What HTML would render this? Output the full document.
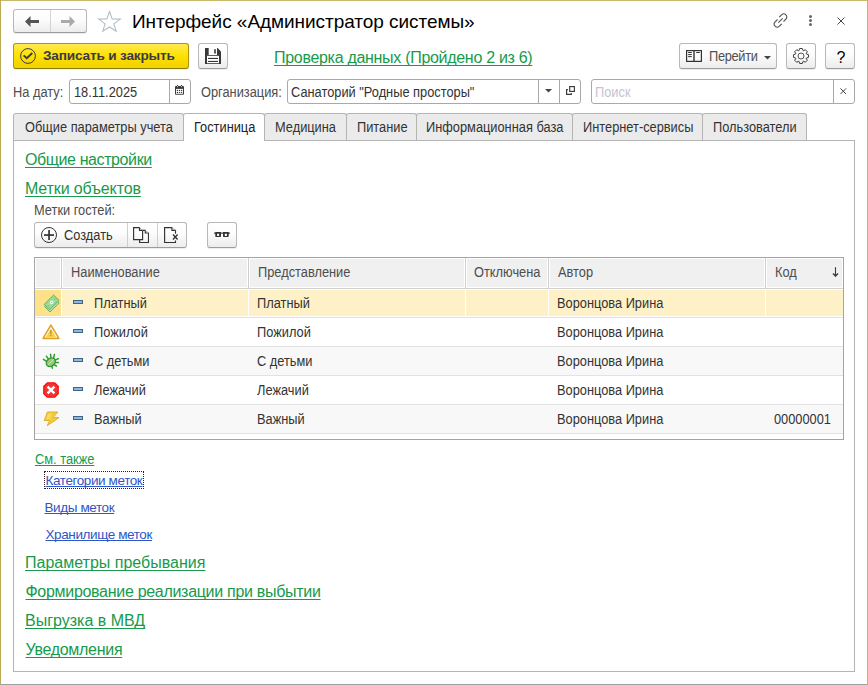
<!DOCTYPE html>
<html><head><meta charset="utf-8">
<style>
*{box-sizing:border-box}
html,body{margin:0;padding:0;background:#fff}
body{width:868px;height:685px;position:relative;overflow:hidden;font-family:"Liberation Sans",sans-serif;color:#333}
.abs{position:absolute}
.t{position:absolute;white-space:nowrap;font-size:14px;line-height:14px;letter-spacing:-0.6px}
.n{letter-spacing:0;transform:scaleX(0.915);transform-origin:0 0}
.lnk{position:absolute;white-space:nowrap;font-size:16px;line-height:16px;letter-spacing:-0.3px;color:#179a4b;text-decoration:underline;text-decoration-thickness:1px;text-underline-offset:2px;text-decoration-skip-ink:none}
.blue{color:#2f56c6;font-size:13.5px;line-height:13.5px;letter-spacing:-0.4px}
.btn{position:absolute;border:1px solid #b8b8b8;border-bottom-color:#9c9c9c;border-radius:3px;background:linear-gradient(#ffffff 0%,#fcfcfc 45%,#ececec 100%);box-shadow:0 1px 0 rgba(0,0,0,0.07)}
.inp{position:absolute;border:1px solid #a9a9a9;border-radius:3px;background:#fff}
.vl{position:absolute;top:0;bottom:0;width:1px;background:#a9a9a9}
.tab{position:absolute;top:113px;height:28px;border:1px solid #b4b4b4;border-bottom:none;border-radius:3px 3px 0 0;background:#ebebeb}
.tab.act{background:#fff;height:28px;z-index:2}
.row{position:absolute;left:35px;width:808px;height:29px}
</style></head><body>
<!-- window frame -->
<div class="abs" style="left:0;top:0;width:868px;height:1px;background:#c9b96b"></div>
<div class="abs" style="left:0;top:0;width:1px;height:685px;background:#bcab55"></div>
<div class="abs" style="left:867px;top:0;width:1px;height:685px;background:#c4b45c;z-index:5"></div>
<div class="abs" style="left:0;top:684px;width:868px;height:1px;background:#a0a0a4"></div>

<!-- nav buttons -->
<div class="btn" style="left:13px;top:9px;width:74px;height:24px"></div>
<div class="abs" style="left:50px;top:10px;width:1px;height:22px;background:#d4d4d4"></div>
<svg class="abs" style="left:25px;top:16px" width="14" height="11" viewBox="0 0 14 11"><path d="M0 5.5 L5.5 0 L5.5 4 L14 4 L14 7 L5.5 7 L5.5 11 Z" fill="#555"/></svg>
<svg class="abs" style="left:61px;top:16px" width="14" height="11" viewBox="0 0 14 11"><path d="M14 5.5 L8.5 0 L8.5 4 L0 4 L0 7 L8.5 7 L8.5 11 Z" fill="#aaa"/></svg>
<!-- star -->
<svg class="abs" style="left:97px;top:9px" width="25" height="24" viewBox="0 0 25 24"><path d="M12.5 2.5 L15.2 9.9 L23.3 10.1 L16.9 14.9 L19.2 22.2 L12.5 18 L5.8 22.2 L8.1 14.9 L1.7 10.1 L9.8 9.9 Z" fill="none" stroke="#b4bcc4" stroke-width="1.1"/></svg>
<!-- title -->
<div class="t" style="left:132px;top:12px;font-size:19px;line-height:19px;color:#000;letter-spacing:-0.05px">Интерфейс «Администратор системы»</div>
<!-- top right icons -->
<svg class="abs" style="left:772px;top:12px" width="17" height="17" viewBox="0 0 17 17"><g fill="none" stroke="#505050" stroke-width="1.1"><path d="M7.2 5.2 L9.6 2.8 A2.6 2.6 0 0 1 13.9 7.1 L11.5 9.5"/><path d="M9.8 11.8 L7.4 14.2 A2.6 2.6 0 0 1 3.1 9.9 L5.5 7.5"/><path d="M6.3 10.7 L10.7 6.3"/></g></svg>
<div class="abs" style="left:809px;top:15px;width:3px;height:3px;border-radius:50%;background:#666"></div>
<div class="abs" style="left:809px;top:19px;width:3px;height:3px;border-radius:50%;background:#666"></div>
<div class="abs" style="left:809px;top:23px;width:3px;height:3px;border-radius:50%;background:#666"></div>
<svg class="abs" style="left:836.5px;top:16.5px" width="8" height="8" viewBox="0 0 8 8"><path d="M0.5 0.5 L7.5 7.5 M7.5 0.5 L0.5 7.5" stroke="#444" stroke-width="1"/></svg>

<!-- row 2 -->
<div class="abs" style="left:13px;top:43px;width:176px;height:26px;border:1px solid #ad9606;border-bottom-color:#8f7c00;border-radius:3px;background:linear-gradient(#ffea50,#fde100 50%,#f0d000);box-shadow:0 1px 0 rgba(60,60,120,0.08)"></div>
<svg class="abs" style="left:20px;top:48px" width="16" height="16" viewBox="0 0 16 16"><circle cx="8" cy="8" r="7.4" fill="none" stroke="#3a3a4a" stroke-width="1"/><path d="M3.6 7.4 L6.8 10.2 L12.3 5" fill="none" stroke="#3a3a4a" stroke-width="1.9"/></svg>
<div class="t" style="left:43px;top:49.3px;font-size:13.6px;line-height:13.6px;font-weight:bold;color:#3a3a48;letter-spacing:-0.17px">Записать и закрыть</div>
<div class="btn" style="left:198px;top:43px;width:30px;height:26px"></div>
<svg class="abs" style="left:205px;top:48px" width="16" height="16" viewBox="0 0 16 16"><path d="M0 0 H12.6 L16 3.6 V16 H0 Z" fill="#383838"/><rect x="3.7" y="0" width="8.3" height="7" fill="#fff"/><rect x="9.2" y="1.2" width="1.6" height="4.4" fill="#383838"/><rect x="2" y="7.8" width="12" height="7.4" fill="#fff"/><rect x="3" y="9.9" width="10" height="1.1" fill="#383838"/><rect x="3" y="12.9" width="10" height="1.1" fill="#383838"/></svg>
<div class="lnk" style="left:274px;top:50px">Проверка данных (Пройдено 2 из 6)</div>

<div class="btn" style="left:679px;top:43px;width:98px;height:26px"></div>
<svg class="abs" style="left:686px;top:50px" width="16" height="12" viewBox="0 0 16 12"><rect x="0.6" y="0.6" width="14.8" height="10.8" fill="none" stroke="#333" stroke-width="1.2"/><rect x="7.3" y="0.6" width="1.4" height="10.8" fill="#333"/><g fill="#333"><rect x="2.1" y="2" width="3.7" height="1"/><rect x="2.1" y="4.1" width="3.7" height="1"/><rect x="2.1" y="6.1" width="3.7" height="1"/><rect x="10.2" y="2" width="3.6" height="1"/></g></svg>
<div class="t n" style="left:709px;top:49px;color:#505050;letter-spacing:-0.35px">Перейти</div>
<svg class="abs" style="left:764px;top:56px" width="7" height="4" viewBox="0 0 7 4"><path d="M0 0 H7 L3.5 3.5 Z" fill="#444"/></svg>

<div class="btn" style="left:786px;top:43px;width:30px;height:26px"></div>
<svg class="abs" style="left:792px;top:47px" width="18" height="18" viewBox="0 0 18 18"><path fill="none" stroke="#3a3a3a" stroke-width="1" stroke-linejoin="round" d="M6.95 3.68 L7.66 1.52 L10.34 1.52 L11.05 3.68 A5.7 5.7 0 0 1 11.31 3.79 L13.34 2.76 L15.24 4.66 L14.21 6.69 A5.7 5.7 0 0 1 14.32 6.95 L16.48 7.66 L16.48 10.34 L14.32 11.05 A5.7 5.7 0 0 1 14.21 11.31 L15.24 13.34 L13.34 15.24 L11.31 14.21 A5.7 5.7 0 0 1 11.05 14.32 L10.34 16.48 L7.66 16.48 L6.95 14.32 A5.7 5.7 0 0 1 6.69 14.21 L4.66 15.24 L2.76 13.34 L3.79 11.31 A5.7 5.7 0 0 1 3.68 11.05 L1.52 10.34 L1.52 7.66 L3.68 6.95 A5.7 5.7 0 0 1 3.79 6.69 L2.76 4.66 L4.66 2.76 L6.69 3.79 Z"/><circle cx="9" cy="9" r="3" fill="none" stroke="#555" stroke-width="1"/></svg>
<div class="btn" style="left:825px;top:43px;width:30px;height:26px"></div>
<div class="t" style="left:836.5px;top:49.5px;font-size:16px;line-height:16px;color:#000;letter-spacing:0">?</div>

<!-- row 3 -->
<div class="t n" style="left:13px;top:85px;color:#4d4d4d">На дату:</div>
<div class="inp" style="left:69px;top:79px;width:122px;height:25px"><div class="vl" style="left:99px"></div></div>
<div class="t n" style="left:73.5px;top:85px;color:#333">18.11.2025</div>
<svg class="abs" style="left:175px;top:85px" width="9" height="10" viewBox="0 0 9 10"><rect x="0" y="0.9" width="9" height="8.9" rx="1" fill="#3c3c3c"/><rect x="1" y="3.9" width="7" height="4.9" fill="#fff"/><rect x="1.9" y="0" width="1.2" height="1.2" fill="#3c3c3c"/><rect x="5.9" y="0" width="1.2" height="1.2" fill="#3c3c3c"/><rect x="2.1" y="1.1" width="0.8" height="1" fill="#fff"/><rect x="6.1" y="1.1" width="0.8" height="1" fill="#fff"/><g fill="#3c3c3c"><circle cx="2.4" cy="5.4" r="0.7"/><circle cx="4.5" cy="5.4" r="0.7"/><circle cx="6.6" cy="5.4" r="0.7"/><circle cx="2.4" cy="7.4" r="0.7"/><circle cx="4.5" cy="7.4" r="0.7"/><circle cx="6.6" cy="7.4" r="0.7"/></g></svg>
<div class="t n" style="left:200.5px;top:85px;color:#4d4d4d">Организация:</div>
<div class="inp" style="left:287px;top:79px;width:294px;height:25px"><div class="vl" style="left:250px"></div><div class="vl" style="left:271px"></div></div>
<div class="t n" style="left:291px;top:85px;color:#333">Санаторий "Родные просторы"</div>
<svg class="abs" style="left:545px;top:89px" width="7" height="4" viewBox="0 0 7 4"><path d="M0 0 H7 L3.5 3.5 Z" fill="#444"/></svg>
<svg class="abs" style="left:566px;top:86px" width="9" height="9" viewBox="0 0 9 9"><rect x="3.7" y="0.6" width="4.7" height="4.8" fill="none" stroke="#3a3a3a" stroke-width="1.15"/><path d="M1.9 3.6 H0.6 V8.4 H5.3 V7.1" fill="none" stroke="#3a3a3a" stroke-width="1.15"/></svg>
<div class="inp" style="left:591px;top:79px;width:264px;height:25px"><div class="vl" style="left:241px"></div></div>
<div class="t n" style="left:594.5px;top:85px;color:#c4c4d0">Поиск</div>
<svg class="abs" style="left:840px;top:87.5px" width="6.5" height="6.5" viewBox="0 0 6.5 6.5"><path d="M0.4 0.4 L6.1 6.1 M6.1 0.4 L0.4 6.1" stroke="#444" stroke-width="1"/></svg>

<!-- panel -->
<div class="abs" style="left:13px;top:140px;width:842px;height:532px;border:1px solid #b4b4b4;z-index:1"></div>
<!-- tabs -->
<div class="tab" style="left:13px;width:171px"></div>
<div class="tab act" style="left:183px;width:82px;height:28px"></div>
<div class="tab" style="left:264px;width:83px"></div>
<div class="tab" style="left:346px;width:71px"></div>
<div class="tab" style="left:416px;width:157px"></div>
<div class="tab" style="left:572px;width:131px"></div>
<div class="tab" style="left:702px;width:105px"></div>
<div class="t n" style="left:24.5px;top:119.5px;color:#333;z-index:3">Общие параметры учета</div>
<div class="t n" style="left:193.5px;top:119.5px;color:#222;z-index:3">Гостиница</div>
<div class="t n" style="left:274.5px;top:119.5px;color:#333;z-index:3">Медицина</div>
<div class="t n" style="left:356.5px;top:119.5px;color:#333;z-index:3">Питание</div>
<div class="t n" style="left:425.5px;top:119.5px;color:#333;z-index:3">Информационная база</div>
<div class="t n" style="left:582.5px;top:119.5px;color:#333;z-index:3">Интернет-сервисы</div>
<div class="t n" style="left:712.5px;top:119.5px;color:#333;z-index:3">Пользователи</div>

<!-- content links -->
<div class="lnk" style="left:25px;top:152px;letter-spacing:-0.4px">Общие настройки</div>
<div class="lnk" style="left:25px;top:181px;letter-spacing:-0.14px">Метки объектов</div>
<div class="t n" style="left:33.5px;top:203.3px;color:#4d4d4d">Метки гостей:</div>

<!-- command bar -->
<div class="btn" style="left:34px;top:222px;width:153px;height:26px"></div>
<div class="abs" style="left:127px;top:223px;width:1px;height:24px;background:#cfcfcf"></div>
<div class="abs" style="left:157px;top:223px;width:1px;height:24px;background:#cfcfcf"></div>
<svg class="abs" style="left:41px;top:227px" width="16" height="16" viewBox="0 0 16 16"><circle cx="8" cy="8" r="7.5" fill="none" stroke="#333" stroke-width="1"/><rect x="7.2" y="3" width="1.7" height="10" fill="#333"/><rect x="3" y="7.2" width="10" height="1.7" fill="#333"/></svg>
<div class="t n" style="left:64px;top:228.4px;color:#333">Создать</div>
<svg class="abs" style="left:133px;top:227px" width="16" height="16" viewBox="0 0 16 16"><g fill="none" stroke="#333" stroke-width="1.15"><path d="M9.6 3.4 H12.3 V6 H15.5 V15.5 H6.6 V12.6"/><path d="M0.6 0.6 H6.5 V3.4 H9.6 V12.6 H0.6 Z"/></g><path d="M6.5 0.6 L9.6 3.4 M12.3 3.4 L15.5 6" stroke="#999" stroke-width="0.8"/></svg>
<svg class="abs" style="left:164px;top:227px" width="15" height="16" viewBox="0 0 15 16"><path d="M11.5 6.8 V3.4 H7.9 V0.6 H0.6 V15.5 H11.5 V13.4" fill="none" stroke="#333" stroke-width="1.15"/><path d="M7.9 0.6 L11.5 3.4" stroke="#999" stroke-width="0.8"/><path d="M9 7.6 L13.6 12.5 M13.6 7.6 L9 12.5" stroke="#333" stroke-width="1.4"/></svg>
<div class="btn" style="left:207px;top:222px;width:30px;height:26px"></div>
<svg class="abs" style="left:214px;top:231px" width="16" height="7" viewBox="0 0 16 7"><rect x="0" y="1.6" width="16" height="1.1" fill="#333"/><path fill-rule="evenodd" fill="#333" d="M1.3 1 H7 V5.3 Q7 6 6.3 6 H2 Q1.3 6 1.3 5.3 Z M3.1 2.1 V5 H5.1 V2.1 Z M9 1 H14.7 V5.3 Q14.7 6 14 6 H9.7 Q9 6 9 5.3 Z M10.8 2.1 V5 H12.9 V2.1 Z"/></svg>

<!-- table -->
<div class="abs" style="left:34px;top:257px;width:810px;height:183px;border:1px solid #a4a4a4;background:#fff"></div>
<div class="abs" style="left:35px;top:258px;width:26px;height:30px;border:1px solid #fff;background:#f0f0f0"></div>
<div class="abs" style="left:62px;top:258px;width:186px;height:30px;border:1px solid #fff;background:#f0f0f0"></div>
<div class="abs" style="left:249px;top:258px;width:216px;height:30px;border:1px solid #fff;background:#f0f0f0"></div>
<div class="abs" style="left:466px;top:258px;width:82px;height:30px;border:1px solid #fff;background:#f0f0f0"></div>
<div class="abs" style="left:549px;top:258px;width:216px;height:30px;border:1px solid #fff;background:#f0f0f0"></div>
<div class="abs" style="left:766px;top:258px;width:77px;height:30px;border:1px solid #fff;background:#f0f0f0"></div>
<div class="abs" style="left:61px;top:258px;width:1px;height:30px;background:#cfcfcf"></div>
<div class="abs" style="left:248px;top:258px;width:1px;height:30px;background:#cfcfcf"></div>
<div class="abs" style="left:465px;top:258px;width:1px;height:30px;background:#cfcfcf"></div>
<div class="abs" style="left:548px;top:258px;width:1px;height:30px;background:#cfcfcf"></div>
<div class="abs" style="left:765px;top:258px;width:1px;height:30px;background:#cfcfcf"></div>
<div class="abs" style="left:35px;top:288px;width:808px;height:1px;background:#d2d2d2"></div>
<div class="t n" style="left:70.5px;top:265.2px;color:#4d4d4d">Наименование</div>
<div class="t n" style="left:257.5px;top:265.2px;color:#4d4d4d">Представление</div>
<div class="t n" style="left:473.5px;top:265.2px;color:#4d4d4d">Отключена</div>
<div class="t n" style="left:557.5px;top:265.2px;color:#4d4d4d">Автор</div>
<div class="t n" style="left:774.5px;top:265.2px;color:#4d4d4d">Код</div>
<svg class="abs" style="left:832px;top:267px" width="7" height="10" viewBox="0 0 7 10"><path d="M3.5 0.2 V9" stroke="#3a3a3a" stroke-width="1.1"/><path d="M1 6.6 L3.5 9.1 L6 6.6" fill="none" stroke="#3a3a3a" stroke-width="1.4"/></svg>

<!-- rows -->
<div class="abs" style="left:35px;top:290px;width:26px;height:26px;background:#fde18b"></div>
<div class="abs" style="left:62px;top:290px;width:186px;height:26px;background:#fef1c8"></div>
<div class="abs" style="left:249px;top:290px;width:216px;height:26px;background:#fef1c8"></div>
<div class="abs" style="left:466px;top:290px;width:82px;height:26px;background:#fef1c8"></div>
<div class="abs" style="left:549px;top:290px;width:216px;height:26px;background:#fef1c8"></div>
<div class="abs" style="left:766px;top:290px;width:77px;height:26px;background:#fef1c8"></div>
<div class="abs" style="left:35px;top:317px;width:808px;height:1px;background:#e2e2e2"></div>
<div class="abs" style="left:35px;top:346px;width:808px;height:1px;background:#e2e2e2"></div>
<div class="abs" style="left:35px;top:375px;width:808px;height:1px;background:#e2e2e2"></div>
<div class="abs" style="left:35px;top:404px;width:808px;height:1px;background:#e2e2e2"></div>
<div class="abs" style="left:35px;top:433px;width:808px;height:1px;background:#e2e2e2"></div>
<div class="abs" style="left:35px;top:347px;width:808px;height:28px;background:#f8f8f8"></div>
<div class="abs" style="left:35px;top:405px;width:808px;height:28px;background:#f8f8f8"></div>


<!-- minus icons -->
<div class="abs" style="left:73px;top:300px;width:10px;height:4px;background:#8cb8e2;border:1px solid #3f6585"></div>
<div class="abs" style="left:73px;top:329px;width:10px;height:4px;background:#8cb8e2;border:1px solid #3f6585"></div>
<div class="abs" style="left:73px;top:358px;width:10px;height:4px;background:#8cb8e2;border:1px solid #3f6585"></div>
<div class="abs" style="left:73px;top:387px;width:10px;height:4px;background:#8cb8e2;border:1px solid #3f6585"></div>
<div class="abs" style="left:73px;top:416px;width:10px;height:4px;background:#8cb8e2;border:1px solid #3f6585"></div>

<!-- row icons -->
<svg class="abs" style="left:42px;top:293px" width="19" height="20" viewBox="0 0 19 20"><path d="M2.6 13.6 L11.6 4.6 L17.2 10 L8 19 Z" fill="#b8e4b0" stroke="#5aab5a" stroke-width="0.9" stroke-linejoin="round"/><path d="M2.2 11.4 L11.6 2 L17 7.4 L7.6 16.8 Z" fill="#a3dc9c" stroke="#55a655" stroke-width="0.9" stroke-linejoin="round"/><path d="M4.3 11.4 L11.6 4.1 L14.9 7.4 L7.6 14.7 Z" fill="none" stroke="#82c67e" stroke-width="0.6"/><circle cx="9.6" cy="9.4" r="1.8" fill="#eefaea"/><circle cx="9.6" cy="9.4" r="0.7" fill="#8fcf8a"/><circle cx="12.6" cy="6.3" r="0.45" fill="#5aab5a"/><circle cx="6.6" cy="12.4" r="0.45" fill="#5aab5a"/></svg>
<svg class="abs" style="left:42px;top:324px" width="18" height="16" viewBox="0 0 18 16"><path d="M8.9 1.2 L16.9 14.4 H1.1 Z" fill="#fff" stroke="#e3a12a" stroke-width="1.6" stroke-linejoin="round"/><path d="M8.9 4.6 L14 13 H3.8 Z" fill="#f3d24a"/><rect x="8.2" y="6" width="1.4" height="4" fill="#c8922a"/><rect x="8.2" y="10.9" width="1.4" height="1.2" fill="#c8922a"/></svg>
<svg class="abs" style="left:42px;top:352px" width="18" height="18" viewBox="0 0 18 18"><g stroke="#2e9e2e" stroke-width="1.5" stroke-linecap="round"><path d="M1.4 7.4 L4.5 9.4 M4.4 4.2 L6.4 7.2 M8.6 2.3 L8.9 6 M12.4 2.5 L11.6 6 M16.4 6.6 L12.8 8.2 M16.4 10.5 L13.2 10.4 M14.4 14 L12 12.6 M10.3 16.2 L9.8 14"/></g><ellipse cx="8.8" cy="10.2" rx="5.6" ry="4.6" transform="rotate(-42 8.8 10.2)" fill="#2f9a2f"/><ellipse cx="8.8" cy="10.2" rx="4.2" ry="3.2" transform="rotate(-42 8.8 10.2)" fill="#98c878"/><path d="M5.6 13.2 L12 7.2" stroke="#d8ecd0" stroke-width="0.8"/></svg>
<svg class="abs" style="left:43px;top:382px" width="16" height="16" viewBox="0 0 16 16"><path d="M4.3 0.8 H11.7 L15.2 4.3 V11.7 L11.7 15.2 H4.3 L0.8 11.7 V4.3 Z" fill="#ee3434" stroke="#ff1010" stroke-width="1.3"/><path d="M4.6 4.6 L11.4 11.4 M11.4 4.6 L4.6 11.4" stroke="#fff" stroke-width="2.5"/></svg>
<svg class="abs" style="left:43px;top:411px" width="17" height="16" viewBox="0 0 17 16"><path d="M4.4 1 H14.8 L10.2 6.6 H16 L4.2 14.8 L6.6 9.5 H1.2 Z" fill="#f2cc3a" stroke="#deaa28" stroke-width="0.9" stroke-linejoin="round"/><path d="M5.6 2.2 H8.5 L6.8 8.2 H3.2 Z" fill="#f8dc58"/></svg>

<!-- row texts -->
<div class="t n" style="left:94px;top:296px;color:#333">Платный</div>
<div class="t n" style="left:257px;top:296px;color:#333">Платный</div>
<div class="t n" style="left:557px;top:296px;color:#333">Воронцова Ирина</div>
<div class="t n" style="left:94px;top:325px;color:#333">Пожилой</div>
<div class="t n" style="left:257px;top:325px;color:#333">Пожилой</div>
<div class="t n" style="left:557px;top:325px;color:#333">Воронцова Ирина</div>
<div class="t n" style="left:94px;top:354px;color:#333">С детьми</div>
<div class="t n" style="left:257px;top:354px;color:#333">С детьми</div>
<div class="t n" style="left:557px;top:354px;color:#333">Воронцова Ирина</div>
<div class="t n" style="left:94px;top:383px;color:#333">Лежачий</div>
<div class="t n" style="left:257px;top:383px;color:#333">Лежачий</div>
<div class="t n" style="left:557px;top:383px;color:#333">Воронцова Ирина</div>
<div class="t n" style="left:94px;top:412px;color:#333">Важный</div>
<div class="t n" style="left:257px;top:412px;color:#333">Важный</div>
<div class="t n" style="left:557px;top:412px;color:#333">Воронцова Ирина</div>
<div class="t n" style="left:774px;top:412px;color:#333">00000001</div>

<!-- see also -->
<div class="t n" style="left:35px;top:452px;color:#179a4b;text-decoration:underline;text-decoration-thickness:1px;text-underline-offset:1px;text-decoration-skip-ink:none">См. также</div>
<div class="abs" style="left:44px;top:471px;width:100px;height:18px;border:1px dotted #222"></div>
<div class="t blue" style="left:45.5px;top:474px;text-decoration:underline;text-decoration-thickness:1px;text-underline-offset:1px;text-decoration-skip-ink:none">Категории меток</div>
<div class="t blue" style="left:44.5px;top:501px;text-decoration:underline;text-decoration-thickness:1px;text-underline-offset:1px;text-decoration-skip-ink:none">Виды меток</div>
<div class="t blue" style="left:45.5px;top:528px;text-decoration:underline;text-decoration-thickness:1px;text-underline-offset:1px;text-decoration-skip-ink:none">Хранилище меток</div>

<div class="lnk" style="left:25px;top:555px;letter-spacing:0px">Параметры пребывания</div>
<div class="lnk" style="left:25.5px;top:584px">Формирование реализации при выбытии</div>
<div class="lnk" style="left:25px;top:613px;letter-spacing:0px">Выгрузка в МВД</div>
<div class="lnk" style="left:25.5px;top:642px">Уведомления</div>


</body></html>
